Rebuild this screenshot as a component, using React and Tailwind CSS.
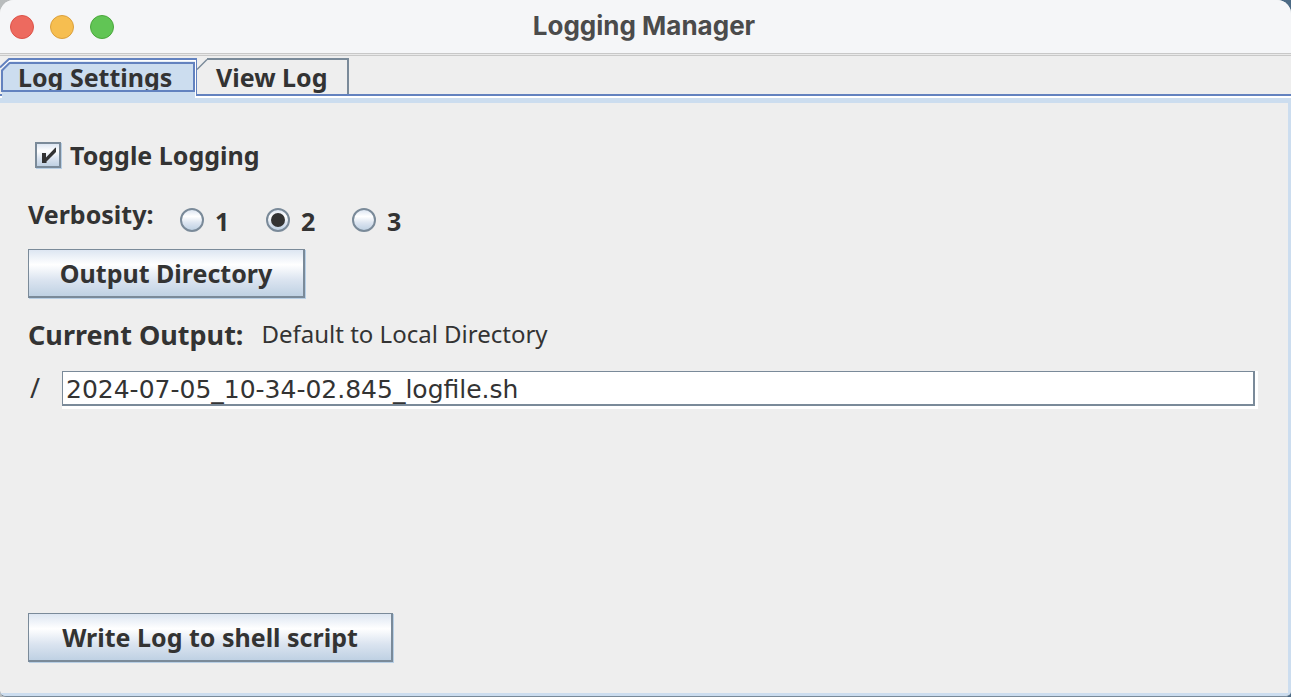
import React, { useState } from "react";

const metal =
  "bg-[linear-gradient(180deg,#dde6f2_0%,#ffffff_32%,#dbe4f0_65%,#bfd1e3_100%)]";

function TitleBar() {
  return (
    <header className="relative flex h-[53px] items-center justify-center bg-[#f5f6f8] pr-[3px] pb-px">
      <div className="absolute left-[10px] top-[15px] flex gap-4">
        <button aria-label="Close" className="size-6 rounded-full border border-[#dd5248] bg-[#ed6a5f]" />
        <button aria-label="Minimize" className="size-6 rounded-full border border-[#dba03c] bg-[#f6be50]" />
        <button aria-label="Zoom" className="size-6 rounded-full border border-[#4aa73c] bg-[#61c555]" />
      </div>
      <h1 className="font-['Inter',sans-serif] text-[26px] leading-8 font-bold text-[#4b4b4b]">
        Logging Manager
      </h1>
    </header>
  );
}

function Tabs({ tab, onSelect }) {
  return (
    <div className="flex h-[38px]" role="tablist">
      <button
        role="tab"
        aria-selected={tab === 0}
        onClick={() => onSelect(0)}
        className="relative z-10 flex h-[47px] w-[196px] items-start"
      >
        <svg className="absolute inset-0 h-[47px] w-[197px]" viewBox="0 0 197 47" aria-hidden="true">
          <path d="M2 47V13L10 4H195V47Z" fill="#ccddef" />
          <path d="M0 11.500L9.500 4H195" fill="none" stroke="#fff" strokeWidth="3" />
          <path d="M195.500 3V40" fill="none" stroke="#fff" strokeWidth="1" />
          <path d="M0 11.500L9 3H197" fill="none" stroke="#6382bf" strokeWidth="2" />
          <path d="M196.500 2V40" fill="none" stroke="#6382bf" strokeWidth="1" />
          <path d="M2 35V14.500L9.500 7H194V35Z" fill="#ccddef" />
          <path d="M2 35V14.500L9.500 7H194V35" fill="none" stroke="#6382bf" strokeWidth="2" />
        </svg>
        <span className="relative pl-[18px] leading-[43px]">Log Settings</span>
        <svg className="absolute inset-0 h-[47px] w-[197px]" viewBox="0 0 197 47" aria-hidden="true">
          <path d="M2 34H195V47H2Z" fill="#ccddef" />
          <path d="M1 35H195" stroke="#6382bf" strokeWidth="2" />
        </svg>
      </button>
      <button
        role="tab"
        aria-selected={tab === 1}
        onClick={() => onSelect(1)}
        className="relative flex h-[38px] w-[153px] items-start"
      >
        <svg className="absolute inset-0 h-[38px] w-[153px]" viewBox="0 0 153 38" aria-hidden="true">
          <path d="M1 13.500L11 3.500" fill="none" stroke="#7a8a99" strokeWidth="1.500" />
          <path d="M11 3H152V38" fill="none" stroke="#7a8a99" strokeWidth="2" />
        </svg>
        <span className="relative pl-5 leading-[43px]">View Log</span>
      </button>
    </div>
  );
}

function Radio({ value, checked, onChange }) {
  return (
    <label className="flex w-[86px] items-center gap-[11px]">
      <input
        type="radio"
        name="verbosity"
        value={value}
        checked={checked}
        onChange={onChange}
        className={`${metal} grid size-6 appearance-none place-items-center rounded-full border-2 border-[#7a8a99] checked:before:size-[14px] checked:before:rounded-full checked:before:bg-[#333333] checked:before:content-['']`}
      />
      <span className="pt-[2px]">{value}</span>
    </label>
  );
}

function MetalButton({ children, className }) {
  return (
    <button
      className={`${metal} ${className} h-[49px] shrink-0 self-start border border-r-2 border-b-2 border-[#7a8a99] text-center shadow-[1px_1px_0_#b8cfe5]`}
    >
      {children}
    </button>
  );
}

export default function App() {
  const [tab, setTab] = useState(0);
  const [logging, setLogging] = useState(true);
  const [level, setLevel] = useState("2");
  const [file, setFile] = useState("2024-07-05_10-34-02.845_logfile.sh");

  return (
    <div className="flex min-h-screen flex-col bg-[linear-gradient(90deg,#b9bcbd,#4c6a85)]">
      <div className="flex grow flex-col overflow-hidden rounded-t-[14px] rounded-b-md border-b border-[#7a8a99] bg-[#eeeeee] font-['Noto_Sans',sans-serif] text-[25px] leading-8 font-bold text-[#333333]">
        <TitleBar />
        <div className="h-[3px] border-y border-[#c8c8c8] bg-[#e9e9e9]" />
        <Tabs tab={tab} onSelect={setTab} />
        <div className="h-1 shrink-0 border-t-2 border-[#6382bf] bg-white" />
        <main className="flex grow flex-col border-t-[5px] border-r-[3px] border-b-[3px] border-[#ccddef] pt-9 pr-[30px] pb-[31px] pl-7">
          <label className="ml-[7px] flex items-center gap-[9px] self-start">
            <span className="grid size-[26px]">
              <input
                type="checkbox"
                checked={logging}
                onChange={(e) => setLogging(e.target.checked)}
                className={`${metal} peer col-start-1 row-start-1 size-[26px] appearance-none border-2 border-[#7a8a99] shadow-[1px_1px_0_#b8cfe5]`}
              />
              <svg
                viewBox="0 0 26 26"
                aria-hidden="true"
                className="pointer-events-none invisible col-start-1 row-start-1 size-[26px] peer-checked:visible"
              >
                <path d="M7 11H11V15.500L20 6L21 5.500V10L11.500 19.500V21H7Z" fill="#333333" />
              </svg>
            </span>
            Toggle Logging
          </label>

          <div className="mt-[27px] flex items-start" role="radiogroup" aria-labelledby="verbosity">
            <span id="verbosity" className="w-[152px]">Verbosity:</span>
            <div className="flex pt-[5px]">
              {["1", "2", "3"].map((v) => (
                <Radio key={v} value={v} checked={level === v} onChange={() => setLevel(v)} />
              ))}
            </div>
          </div>

          <MetalButton className="mt-3 w-[277px]">Output Directory</MetalButton>

          <div className="mt-5 flex items-start gap-[18px]">
            <h2 className="pt-px text-[27px]">Current Output:</h2>
            <p className="text-[24px] font-normal">Default to Local Directory</p>
          </div>

          <div className="mt-5 flex items-start font-normal">
            <label htmlFor="filename" className="w-[34px] pt-px pl-[2px] text-[27px]">/</label>
            <div className="flex min-w-0 grow bg-white pr-[3px] pb-[3px]">
              <input
                id="filename"
                value={file}
                onChange={(e) => setFile(e.target.value)}
                className="h-[35px] w-full min-w-0 border border-r-2 border-b-2 border-[#7a8a99] bg-white pt-[2px] pl-[3px] font-['DejaVu_Sans',sans-serif] leading-7 outline-none"
              />
            </div>
          </div>

          <div className="min-h-6 grow" />
          <MetalButton className="w-[365px]">Write Log to shell script</MetalButton>
        </main>
      </div>
    </div>
  );
}
